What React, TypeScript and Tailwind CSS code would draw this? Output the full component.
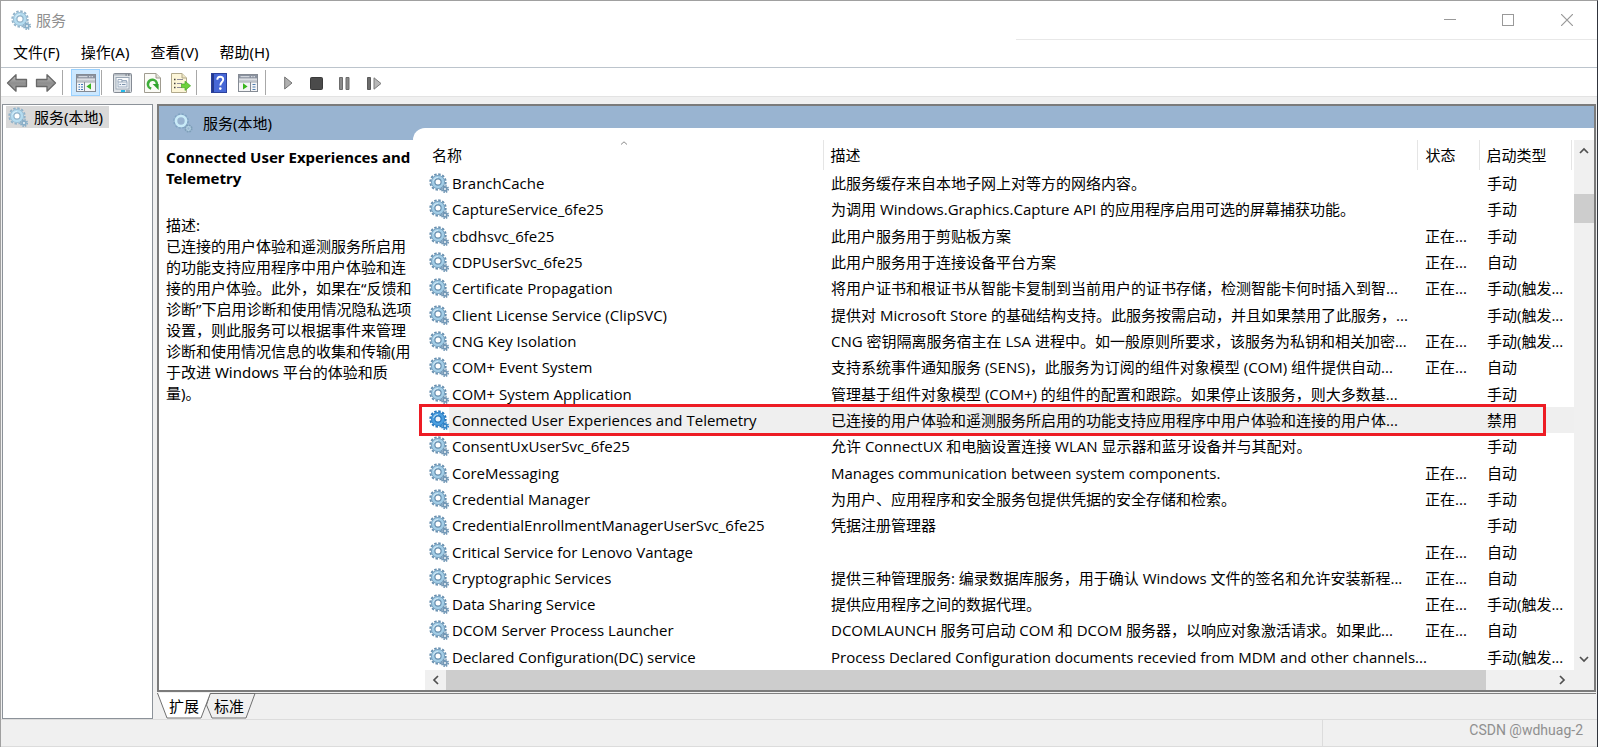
import type { ReactNode } from "react";

type Service = {
  name: string;
  desc: string;
  running?: boolean;
  startup: string;
  selected?: boolean;
};

const services: Service[] = [
  { name: "BranchCache", desc: "此服务缓存来自本地子网上对等方的网络内容。", startup: "手动" },
  { name: "CaptureService_6fe25", desc: "为调用 Windows.Graphics.Capture API 的应用程序启用可选的屏幕捕获功能。", startup: "手动" },
  { name: "cbdhsvc_6fe25", desc: "此用户服务用于剪贴板方案", running: true, startup: "手动" },
  { name: "CDPUserSvc_6fe25", desc: "此用户服务用于连接设备平台方案", running: true, startup: "自动" },
  { name: "Certificate Propagation", desc: "将用户证书和根证书从智能卡复制到当前用户的证书存储，检测智能卡何时插入到智...", running: true, startup: "手动(触发..." },
  { name: "Client License Service (ClipSVC)", desc: "提供对 Microsoft Store 的基础结构支持。此服务按需启动，并且如果禁用了此服务，...", startup: "手动(触发..." },
  { name: "CNG Key Isolation", desc: "CNG 密钥隔离服务宿主在 LSA 进程中。如一般原则所要求，该服务为私钥和相关加密...", running: true, startup: "手动(触发..." },
  { name: "COM+ Event System", desc: "支持系统事件通知服务 (SENS)，此服务为订阅的组件对象模型 (COM) 组件提供自动...", running: true, startup: "自动" },
  { name: "COM+ System Application", desc: "管理基于组件对象模型 (COM+) 的组件的配置和跟踪。如果停止该服务，则大多数基...", startup: "手动" },
  { name: "Connected User Experiences and Telemetry", desc: "已连接的用户体验和遥测服务所启用的功能支持应用程序中用户体验和连接的用户体...", startup: "禁用", selected: true },
  { name: "ConsentUxUserSvc_6fe25", desc: "允许 ConnectUX 和电脑设置连接 WLAN 显示器和蓝牙设备并与其配对。", startup: "手动" },
  { name: "CoreMessaging", desc: "Manages communication between system components.", running: true, startup: "自动" },
  { name: "Credential Manager", desc: "为用户、应用程序和安全服务包提供凭据的安全存储和检索。", running: true, startup: "手动" },
  { name: "CredentialEnrollmentManagerUserSvc_6fe25", desc: "凭据注册管理器", startup: "手动" },
  { name: "Critical Service for Lenovo Vantage", desc: "", running: true, startup: "自动" },
  { name: "Cryptographic Services", desc: "提供三种管理服务: 编录数据库服务，用于确认 Windows 文件的签名和允许安装新程...", running: true, startup: "自动" },
  { name: "Data Sharing Service", desc: "提供应用程序之间的数据代理。", running: true, startup: "手动(触发..." },
  { name: "DCOM Server Process Launcher", desc: "DCOMLAUNCH 服务可启动 COM 和 DCOM 服务器，以响应对象激活请求。如果此...", running: true, startup: "自动" },
  { name: "Declared Configuration(DC) service", desc: "Process Declared Configuration documents recevied from MDM and other channels...", startup: "手动(触发..." },
];

const menus = ["文件(F)", "操作(A)", "查看(V)", "帮助(H)"];

function GearIcon({ tone = "normal" }: { tone?: "normal" | "pale" | "active" }) {
  const [edge, body, small, hole] = {
    normal: ["#6890b0", "#a3cde6", "#7398b6", "#ffffff"],
    pale: ["#92b3ca", "#b5dcf0", "#8aafc8", "#ffffff"],
    active: ["#2878bd", "#4b9fe0", "#3585c8", "#eef6fc"],
  }[tone];
  return (
    <svg viewBox="0 0 20 20" className="size-5 shrink-0" aria-hidden="true">
      <circle cx="9" cy="9" r="7.6" fill="none" stroke={edge} strokeWidth="2.2" strokeDasharray="2.4 1.58" />
      <circle cx="9" cy="9" r="5" fill="none" stroke={body} strokeWidth="4" />
      <circle cx="9" cy="9" r="6.6" fill="none" stroke={edge} strokeWidth="0.7" />
      <path d="M4.6 8.2A4.6 4.6 0 0 1 9 4.6" fill="none" stroke="#e6f5fc" strokeWidth="1.2" opacity="0.7" />
      <circle cx="9" cy="9" r="3.1" fill={hole} stroke={edge} strokeWidth="1.2" />
      <circle cx="16" cy="16" r="3.2" fill="none" stroke={small} strokeWidth="1.7" strokeDasharray="1.5 1" />
      <circle cx="16" cy="16" r="1.8" fill={hole} stroke={small} strokeWidth="1.8" />
    </svg>
  );
}

function HeaderGear() {
  return (
    <svg viewBox="0 0 20 20" className="size-5 shrink-0" aria-hidden="true">
      <circle cx="8" cy="8" r="7" fill="none" stroke="#7fa3c2" strokeWidth="1.6" strokeDasharray="2.2 1.5" />
      <circle cx="8" cy="8" r="5" fill="none" stroke="#c9ebf8" strokeWidth="2.6" />
      <circle cx="15.5" cy="15.5" r="2.8" fill="none" stroke="#7d9fb8" strokeWidth="2.6" strokeDasharray="1.4 0.8" />
      <circle cx="15.5" cy="15.5" r="1.8" fill="none" stroke="#b5d3e4" strokeWidth="1.2" />
    </svg>
  );
}

function ArrowIcon({ flip }: { flip?: boolean }) {
  return (
    <svg viewBox="0 0 22 20" className={flip ? "w-[22px] h-5 -scale-x-100" : "w-[22px] h-5"} aria-hidden="true">
      <defs>
        <linearGradient id="arrow" x1="0" y1="0" x2="0" y2="1">
          <stop offset="0" stopColor="#c4c4c4" />
          <stop offset="0.5" stopColor="#8e8e8e" />
          <stop offset="1" stopColor="#a6a6a6" />
        </linearGradient>
      </defs>
      <path d="M1.5 10 10 1.8V6.5H20.5V13.5H10V18.2Z" fill="url(#arrow)" stroke="#686868" strokeWidth="1.3" strokeLinejoin="round" />
    </svg>
  );
}

function PaneIcon({ right }: { right?: boolean }) {
  return (
    <svg viewBox="0 0 20 18" className="w-5 h-[18px]" aria-hidden="true">
      <rect x="0.5" y="0.5" width="19" height="17" fill="#f4f5f7" stroke="#858b94" />
      <rect x="1" y="1" width="18" height="3.5" fill="#8a929f" />
      <path d="M2.5 2.7h9M13 2.7h1.5M15.5 2.7H17" stroke="#e3e7ec" />
      <path d="M1 6.5h18" stroke="#c4c9d0" strokeWidth="2" />
      <path d="M1 8h18" stroke="#9aa1ab" />
      <path d={right ? "M12.5 8v9.5" : "M8.5 8v9.5"} stroke="#858b94" />
      {right ? (
        <>
          <path d="M5 9.2v6.4L9.6 12.4Z" fill="#38b51e" />
          <path d="M14.5 10.5h3M14.5 13h3M14.5 15.5h3" stroke="#4f7fb0" strokeWidth="1.2" />
        </>
      ) : (
        <>
          <path d="M15 9.2v6.4L10.4 12.4Z" fill="#38b51e" />
          <path d="M2.5 10.5H4M5 10.5h2M2.5 13H4M5 13h2M2.5 15.5H4M5 15.5h2" stroke="#3f78b8" strokeWidth="1.2" />
        </>
      )}
    </svg>
  );
}

function PropertiesIcon() {
  return (
    <svg viewBox="0 0 19 20" className="w-[19px] h-5" aria-hidden="true">
      <rect x="0.5" y="0.5" width="18" height="19" rx="1" fill="#dfe3e7" stroke="#858b94" />
      <path d="M1 1.8h17" stroke="#b3bac2" strokeWidth="1.6" />
      <path d="M12.5 2h1.2M15 2h1.5" stroke="#4d5560" strokeWidth="1.2" />
      <rect x="3" y="4.5" width="13" height="11.5" fill="#fbfcfd" stroke="#9aa7b5" />
      <path d="M5 9V6.5h4V9M9 9V7.5h4.5V9" fill="none" stroke="#9dadc0" />
      <rect x="5" y="9" width="9" height="5" fill="#eef2f7" stroke="#9dadc0" />
      <path d="M6.5 11.5H8M9 11.5h3.5" stroke="#7d93ac" />
      <path d="M8 18h4" stroke="#22b8e8" strokeWidth="2" />
      <path d="M13 18h4" stroke="#a5adb5" strokeWidth="2" />
    </svg>
  );
}

function RefreshIcon() {
  return (
    <svg viewBox="0 0 17 20" className="w-[17px] h-5" aria-hidden="true">
      <path d="M0.5 0.5H12L16.5 5V19.5H0.5Z" fill="#fbfbf6" stroke="#a09c90" />
      <path d="M12 0.5V5H16.5" fill="#e3e1d8" stroke="#a09c90" />
      <path d="M7.2 15.6A4.5 4.5 0 1 1 12.9 11.5" fill="none" stroke="#3fae3a" strokeWidth="2.6" />
      <path d="M8.6 11H14.6V17Z" fill="#2fa32c" />
    </svg>
  );
}

function ExportIcon() {
  return (
    <svg viewBox="0 0 20 20" className="size-5" aria-hidden="true">
      <path d="M0.5 0.5H11L15.5 5V19.5H0.5Z" fill="#fdf6d8" stroke="#b1a98c" />
      <path d="M11 0.5V5H15.5" fill="#efe6c2" stroke="#b1a98c" />
      <path d="M3 6.5h1.5M3 10.5h1.5M3 14.5h1.5" stroke="#44423c" strokeWidth="1.4" />
      <path d="M6 6.5h6M6 10.5h5M6 14.5h5" stroke="#8d8a98" />
      <path d="M10.5 11H14V8.2L19.6 12.8 14 17.4V14.6H10.5Z" fill="#6ed13c" stroke="#43a820" strokeWidth="0.7" />
    </svg>
  );
}

function HelpIcon() {
  return (
    <svg viewBox="0 0 16 20" className="w-4 h-5" aria-hidden="true">
      <rect x="0.5" y="0.5" width="15" height="19" fill="#4667d6" stroke="#2b419c" />
      <path d="M2 1v18" stroke="#24398f" strokeWidth="2" />
      <path d="M6.3 6.8C6.3 4.6 7.6 3.7 9.2 3.7 11 3.7 12.2 4.8 12.2 6.4 12.2 8.9 9.3 9.2 9.3 12.4" fill="none" stroke="#fff" strokeWidth="1.9" />
      <circle cx="9.3" cy="15.6" r="1.3" fill="#fff" />
    </svg>
  );
}

function PlayIcon() {
  return (
    <svg viewBox="0 0 9 14" className="w-[9px] h-3.5" aria-hidden="true">
      <path d="M0.7 1V13L8 7Z" fill="#b0b0b0" stroke="#747474" />
    </svg>
  );
}

function StopIcon() {
  return (
    <svg viewBox="0 0 13 13" className="size-[13px]" aria-hidden="true">
      <rect x="0.5" y="0.5" width="12" height="12" rx="1" fill="#4b4b4b" stroke="#3a3a3a" />
    </svg>
  );
}

function PauseIcon() {
  return (
    <svg viewBox="0 0 11 13" className="w-[11px] h-[13px]" aria-hidden="true">
      <path d="M0.5 0.5h3v12h-3zM7 0.5h3v12H7z" fill="#8a8a8a" stroke="#6c6c6c" />
    </svg>
  );
}

function RestartIcon() {
  return (
    <svg viewBox="0 0 15 13" className="w-[15px] h-[13px]" aria-hidden="true">
      <path d="M0.5 0.5h3v12h-3z" fill="#6c6c6c" stroke="#5a5a5a" />
      <path d="M7 0.8V12.2L14 6.5Z" fill="#b8b8b8" stroke="#7c7c7c" />
    </svg>
  );
}

function Chevron({ d }: { d: string }) {
  return (
    <svg viewBox="0 0 10 10" className="size-2.5" aria-hidden="true">
      <path d={d} fill="none" stroke="#505050" strokeWidth="1.7" />
    </svg>
  );
}

function ToolButton({ label, className, children }: { label: string; className: string; children: ReactNode }) {
  return (
    <button type="button" aria-label={label} className={`flex h-[27px] items-center justify-center pt-0.5 ${className}`}>
      {children}
    </button>
  );
}

function Divider() {
  return <span className="h-[25px] w-px bg-[#a8a8a8]" />;
}

function TitleBar() {
  return (
    <header className="flex h-[38px] shrink-0 items-center bg-white pl-[10px]">
      <GearIcon tone="pale" />
      <h1 className="ml-[5px] flex-1 text-[15px] text-[#8f8f8f]">服务</h1>
      <button type="button" aria-label="最小化" className="flex h-full w-[58px] items-center justify-center">
        <svg viewBox="0 0 12 12" className="size-3"><path d="M0 5.5H12" stroke="#999" /></svg>
      </button>
      <button type="button" aria-label="最大化" className="flex h-full w-[58px] items-center justify-center">
        <svg viewBox="0 0 12 12" className="size-3"><rect x="0.5" y="0.5" width="11" height="11" fill="none" stroke="#999" /></svg>
      </button>
      <button type="button" aria-label="关闭" className="flex h-full w-[60px] items-center justify-center">
        <svg viewBox="0 0 12 12" className="size-3"><path d="M0 0 12 12M12 0 0 12" stroke="#999" strokeWidth="1.2" /></svg>
      </button>
    </header>
  );
}

function Toolbar() {
  return (
    <div className="flex h-7 shrink-0 items-center bg-white pl-0.5">
      <ToolButton label="后退" className="w-7"><ArrowIcon /></ToolButton>
      <ToolButton label="前进" className="w-[30px]"><ArrowIcon flip /></ToolButton>
      <span className="w-px" />
      <Divider />
      <span className="w-2" />
      <ToolButton label="显示/隐藏控制台树" className="w-[29px] border border-[#99d1ff] bg-[#cce8ff]"><PaneIcon /></ToolButton>
      <span className="w-px" />
      <Divider />
      <span className="w-[6px]" />
      <ToolButton label="属性" className="w-[29px]"><PropertiesIcon /></ToolButton>
      <ToolButton label="刷新" className="w-[31px]"><RefreshIcon /></ToolButton>
      <ToolButton label="导出列表" className="w-[25px]"><ExportIcon /></ToolButton>
      <span className="w-[3px]" />
      <Divider />
      <span className="w-[7px]" />
      <ToolButton label="帮助" className="w-[29px]"><HelpIcon /></ToolButton>
      <ToolButton label="显示/隐藏操作窗格" className="w-[29px]"><PaneIcon right /></ToolButton>
      <span className="w-[3px]" />
      <Divider />
      <span className="w-2" />
      <ToolButton label="启动服务" className="w-[29px]"><PlayIcon /></ToolButton>
      <ToolButton label="停止服务" className="w-[27px]"><StopIcon /></ToolButton>
      <ToolButton label="暂停服务" className="w-[29px]"><PauseIcon /></ToolButton>
      <ToolButton label="重新启动服务" className="w-[31px]"><RestartIcon /></ToolButton>
    </div>
  );
}

function ServiceTable() {
  return (
    <table className="h-full w-full table-fixed border-collapse text-left font-['Open_Sans','Noto_Sans_CJK_SC',sans-serif] whitespace-nowrap">
      <colgroup>
        <col className="w-[398px]" />
        <col />
        <col className="w-[62px]" />
        <col className="w-[92px]" />
        <col className="w-[3px]" />
      </colgroup>
      <thead>
        <tr className="h-[30px]">
          <th className="relative border-r border-[#e5e5e5] pl-[7px] font-normal">
            名称
            <svg viewBox="0 0 7 4" className="absolute top-px left-1/2 h-1 w-[7px] -translate-x-1/2" aria-hidden="true">
              <path d="M0.5 3.5 3.5 0.8 6.5 3.5" fill="none" stroke="#8a8a8a" />
            </svg>
          </th>
          <th className="border-r border-[#e5e5e5] pl-[7px] font-normal">描述</th>
          <th className="border-r border-[#e5e5e5] pl-2 font-normal">状态</th>
          <th className="border-r border-[#e5e5e5] pl-[7px] font-normal">启动类型</th>
          <td />
        </tr>
      </thead>
      <tbody>
        {services.map((s) => (
          <tr key={s.name}>
            <td className={s.selected ? "bg-[linear-gradient(to_right,#fff_24px,#efefef_24px)] p-0" : "p-0"}>
              <div className="relative flex items-center gap-[3px] pl-1">
                {s.selected && (
                  <span className="pointer-events-none absolute -inset-y-1.5 -left-1.5 z-10 w-[1127px] border-3 border-[#ed1c24]" />
                )}
                <GearIcon tone={s.selected ? "active" : "normal"} />
                <span>{s.name}</span>
              </div>
            </td>
            <td className={s.selected ? "bg-[#efefef] py-0 pl-2" : "py-0 pl-2"}>{s.desc}</td>
            <td className={s.selected ? "bg-[#efefef] py-0 pl-2" : "py-0 pl-2"}>{s.running ? "正在..." : ""}</td>
            <td colSpan={2} className={s.selected ? "bg-[#efefef] py-0 pl-2" : "py-0 pl-2"}>{s.startup}</td>
          </tr>
        ))}
      </tbody>
    </table>
  );
}

function ServiceList() {
  return (
    <section className="-mt-3 flex min-w-0 flex-1 flex-col rounded-tl-xl bg-white pt-3 pl-3">
      <div className="flex min-h-0 flex-1">
        <div className="min-w-0 flex-1"><ServiceTable /></div>
        <div className="flex w-5 flex-col items-center bg-[#f0f0f0]">
          <button type="button" aria-label="向上滚动" className="flex h-[22px] items-center"><Chevron d="M1 7 5 3 9 7" /></button>
          <span className="mt-8 h-[29px] w-full bg-[#cdcdcd]" />
          <button type="button" aria-label="向下滚动" className="mt-auto flex h-[22px] items-center"><Chevron d="M1 3 5 7 9 3" /></button>
        </div>
      </div>
      <div className="flex h-5 shrink-0 items-center bg-[#f0f0f0] pr-[22px]">
        <button type="button" aria-label="向左滚动" className="flex w-[21px] justify-center"><Chevron d="M7 1 3 5 7 9" /></button>
        <span className="h-full flex-1 bg-[#cdcdcd]" />
        <span className="w-[66px]" />
        <button type="button" aria-label="向右滚动" className="flex w-5 justify-center"><Chevron d="M3 1 7 5 3 9" /></button>
      </div>
    </section>
  );
}

function ViewTabs() {
  return (
    <div className="relative flex h-[26px] shrink-0 items-center border-t border-[#808080] pb-0.5 pl-2">
      <svg viewBox="0 0 100 26" className="absolute -top-px left-0 h-[26px] w-[100px]" aria-hidden="true">
        <path d="M53 0.5H98L89 25H55L49.5 12Z" fill="#f0f0f0" stroke="#707070" />
        <path d="M0.5 0 10 25H44L53.5 0Z" fill="#fff" />
        <path d="M0.5 0 10 25H44L53.5 0" fill="none" stroke="#707070" />
      </svg>
      <button type="button" className="relative w-[38px] pl-1 text-left whitespace-nowrap">扩展</button>
      <button type="button" className="relative w-[38px] pl-[11px] text-left whitespace-nowrap">标准</button>
    </div>
  );
}

export default function App() {
  return (
    <div className="flex h-screen flex-col overflow-hidden border-t border-r border-l border-t-[#a0a0a0] border-r-[#30343c] border-l-[#a0a0a0] bg-[#f0f0f0] font-['Noto_Sans','Noto_Sans_CJK_SC',sans-serif] text-[15px] leading-5 text-black">
      <TitleBar />
      <div className="flex h-px shrink-0 justify-end bg-white">
        <span className="w-[581px] bg-[#e8e8e8]" />
      </div>
      <nav className="flex h-[27px] shrink-0 items-center gap-[21px] bg-white pb-[3px] pl-3">
        {menus.map((m) => (
          <button key={m} type="button">{m}</button>
        ))}
      </nav>
      <div className="h-px shrink-0 bg-[#bcc4cc]" />
      <Toolbar />
      <div className="h-px shrink-0 bg-[#e3e3e3]" />

      <main className="flex min-h-0 flex-1 gap-1 pt-[7px] pr-px pl-px">
        <aside className="w-[151px] shrink-0 border border-[#8c9299] bg-white pt-px pl-[3px]">
          <a href="#local" className="flex h-[22px] w-[103px] items-center gap-[6px] bg-[#d9d9d9] pl-[2px]">
            <GearIcon tone="pale" />
            <span>服务(本地)</span>
          </a>
        </aside>

        <div className="flex min-w-0 flex-1 flex-col">
          <div className="flex min-h-0 flex-1 flex-col border-2 border-[#7b7b7b] bg-white">
            <div className="flex h-[34px] shrink-0 items-center gap-[10px] bg-[#99b4d1] pl-[14px]">
              <HeaderGear />
              <h2>服务(本地)</h2>
            </div>
            <div className="flex min-h-0 flex-1">
              <section className="w-[254px] shrink-0 pt-[7px] pl-[7px] leading-[21px]">
                <h3 className="font-bold">Connected User Experiences and Telemetry</h3>
                <p className="mt-[26px]">描述:</p>
                <p>
                  已连接的用户体验和遥测服务所启用的功能支持应用程序中用户体验和连接的用户体验。此外，如果在“反馈和诊断”下启用诊断和使用情况隐私选项设置，则此服务可以根据事件来管理诊断和使用情况信息的收集和传输(用于改进 Windows 平台的体验和质量)。
                </p>
              </section>
              <ServiceList />
            </div>
          </div>
          <div className="h-px shrink-0" />
          <ViewTabs />
        </div>
      </main>

      <footer className="flex h-7 shrink-0 border-t border-b border-[#dcdcdc]">
        <span className="flex-1" />
        <span className="w-[167px] border-l border-[#dcdcdc]" />
        <span className="flex w-[108px] items-center justify-end pr-[14px] pb-1.5 font-['Roboto',sans-serif] text-sm whitespace-nowrap text-[#8f8f8f]">
          CSDN @wdhuag-2
        </span>
      </footer>
    </div>
  );
}
